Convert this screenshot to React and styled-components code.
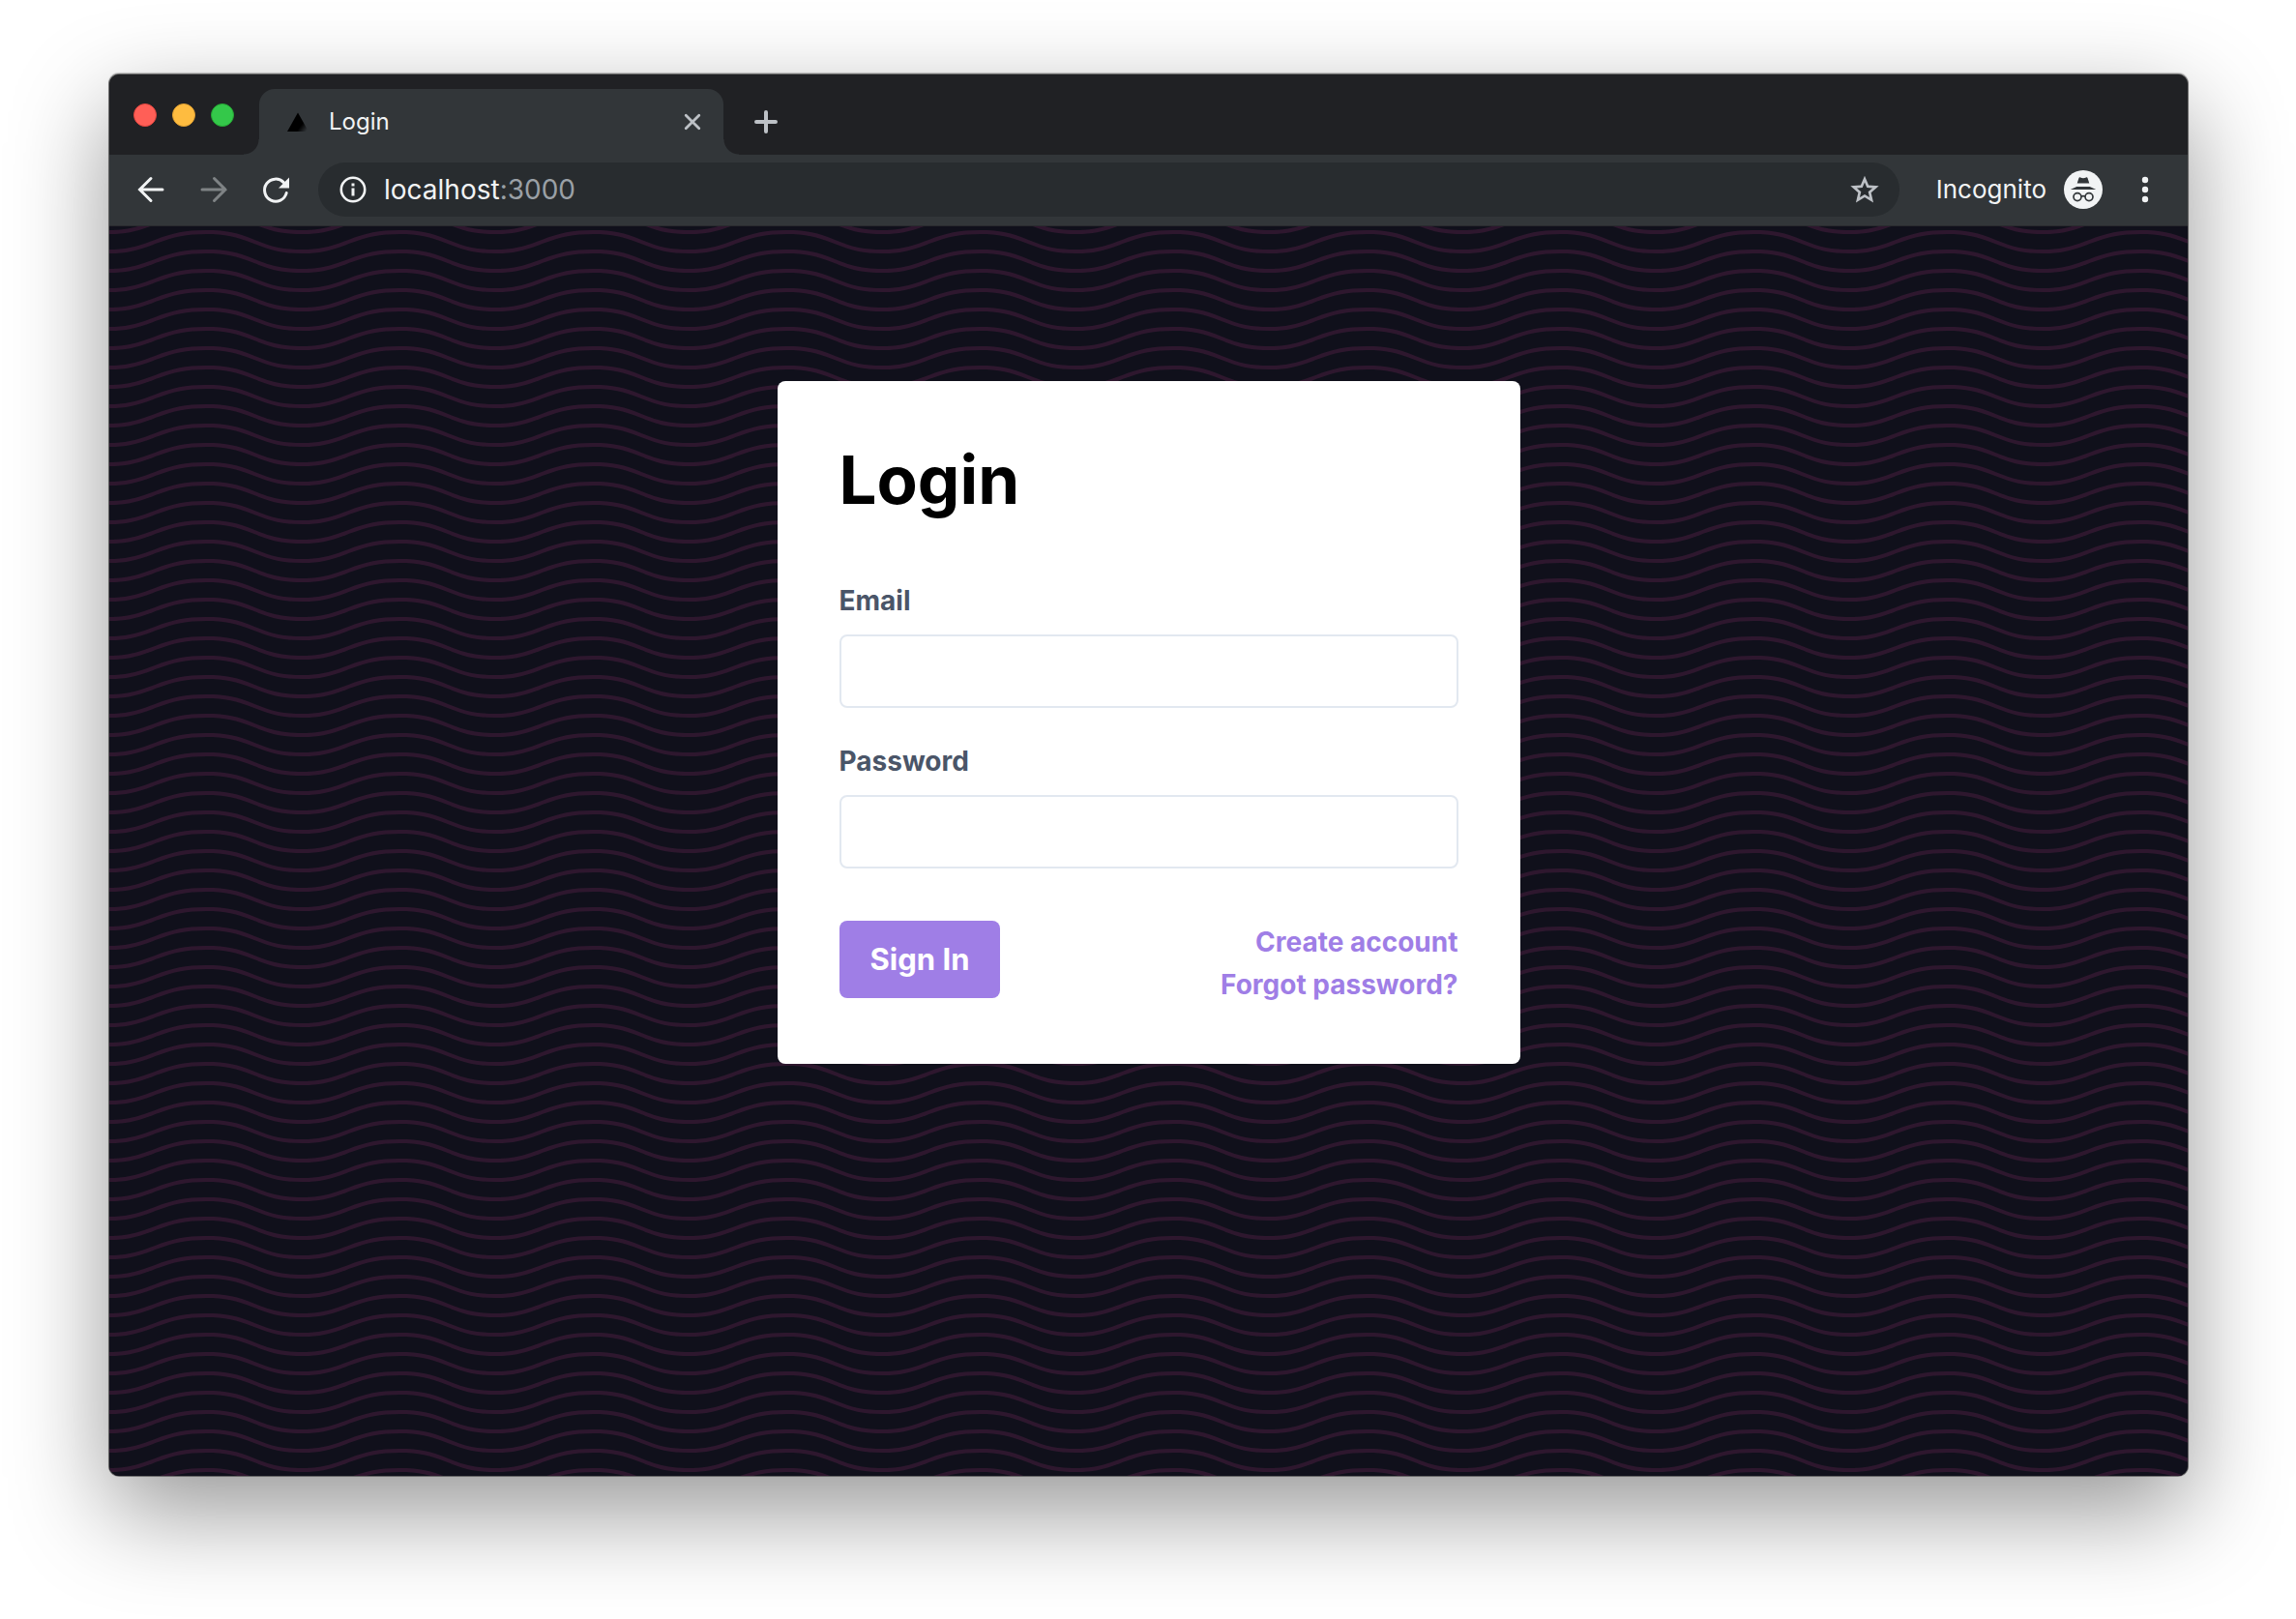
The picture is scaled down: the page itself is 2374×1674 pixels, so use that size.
import React from "react";
import styled, { createGlobalStyle } from "styled-components";

const GlobalStyle = createGlobalStyle`
  *, *::before, *::after { box-sizing: border-box; }
  body {
    margin: 0;
    background: #fff;
    font-family: Inter, "Liberation Sans", sans-serif;
  }
  button, input { font: inherit; }
`;

const WAVES = encodeURIComponent(
  `<svg xmlns="http://www.w3.org/2000/svg" width="200" height="40" viewBox="0 0 100 20"><path fill="#2e172e" fill-rule="evenodd" d="M21.184 20c.357-.13.72-.264 1.088-.402l1.768-.661C33.64 15.347 39.647 14 50 14c10.271 0 15.362 1.222 24.629 4.928.955.383 1.869.74 2.75 1.072h6.225c-2.51-.73-5.139-1.691-8.233-2.928C65.888 13.278 60.562 12 50 12c-10.626 0-16.855 1.397-26.66 5.063l-1.767.662c-2.475.923-4.66 1.674-6.724 2.275h6.335zm0-20C13.258 2.892 8.077 4 0 4V2c5.744 0 9.951-.574 14.85-2h6.334zM77.38 0C85.239 2.966 90.502 4 100 4V2c-6.842 0-11.386-.542-16.396-2h-6.225zM0 14c8.44 0 13.718-1.21 22.272-4.402l1.768-.661C33.64 5.347 39.647 4 50 4c10.271 0 15.362 1.222 24.629 4.928C84.112 12.722 89.438 14 100 14v-2c-10.271 0-15.362-1.222-24.629-4.928C65.888 3.278 60.562 2 50 2 39.374 2 33.145 3.397 23.34 7.063l-1.767.662C13.223 10.84 8.163 12 0 12v2z"/></svg>`
);

const Desktop = styled.div`
  display: flex;
  min-height: 100vh;
  padding: 77px 112px 148px 113px;
  overflow: hidden;
`;

const Window = styled.div`
  flex: 1;
  min-width: 0;
  display: flex;
  flex-direction: column;
  border-radius: 10px;
  overflow: hidden;
  background: #202124;
  box-shadow: 0 0 0 1px rgba(0, 0, 0, 0.4), 0 -1px 1px 1px rgba(0, 0, 0, 0.2),
    0 36px 100px rgba(0, 0, 0, 0.42);
`;

const TabStrip = styled.header`
  display: flex;
  align-items: flex-end;
  height: 83px;
  background: #202124;
`;

const WindowControls = styled.div`
  display: flex;
  align-items: center;
  gap: 16px;
  height: 83px;
  width: 155px;
  padding: 1px 0 0 25px;
`;

const ControlDot = styled.button`
  width: 24px;
  height: 24px;
  padding: 0;
  border: 1px solid ${(p) => p.$edge};
  border-radius: 50%;
  background: ${(p) => p.$fill};
`;

const Tab = styled.div`
  position: relative;
  display: flex;
  align-items: center;
  width: 480px;
  height: 68px;
  padding: 0 20px 0 28px;
  border-radius: 16px 16px 0 0;
  background: #323639;
  color: #f1f3f4;
  font-size: 24px;
  line-height: 32px;

  &::before,
  &::after {
    content: "";
    position: absolute;
    bottom: 0;
    width: 16px;
    height: 16px;
  }
  &::before {
    right: 100%;
    background: radial-gradient(circle at 0 0, transparent 15px, #323639 16px);
  }
  &::after {
    left: 100%;
    background: radial-gradient(circle at 100% 0, transparent 15px, #323639 16px);
  }
`;

const TabTitle = styled.span`
  flex: 1;
  margin-left: 20px;
`;

const IconButton = styled.button`
  display: inline-flex;
  align-items: center;
  justify-content: center;
  flex: none;
  width: ${(p) => p.$size || 32}px;
  height: ${(p) => p.$size || 32}px;
  padding: 0;
  border: 0;
  background: none;
  color: ${(p) => p.$color || "#f1f3f4"};
`;

const NewTab = styled.div`
  display: flex;
  align-items: center;
  height: 68px;
  margin-left: 28px;
`;

const Toolbar = styled.nav`
  display: flex;
  align-items: center;
  height: 74px;
  padding: 0 28px 1px;
  background: #323639;
  border-bottom: 1px solid #292b2e;
`;

const NavButtons = styled.div`
  display: flex;
  gap: 32px;
  margin-right: 28px;
`;

const AddressBar = styled.div`
  flex: 1;
  display: flex;
  align-items: center;
  height: 56px;
  padding: 0 20px;
  border-radius: 28px;
  background: #282c2f;
`;

const Address = styled.div`
  flex: 1;
  margin-left: 16px;
  color: #9aa0a6;
  font-size: 28px;
  line-height: 36px;
`;

const Host = styled.span`
  color: #f1f3f4;
`;

const Profile = styled.div`
  display: flex;
  align-items: center;
  gap: 18px;
  margin: 0 28px 0 38px;
  color: #f1f3f4;
  font-size: 26px;
  line-height: 36px;
`;

const Page = styled.main`
  flex: 1;
  padding: 160px 32px;
  background: #10101b url("data:image/svg+xml,${WAVES}") 0 0 / 200px 40px;
`;

const Card = styled.form`
  width: 100%;
  max-width: 768px;
  margin: 0 auto;
  padding: 64px 64px 60px;
  border-radius: 8px;
  background: #fff;
`;

const Title = styled.h1`
  margin: 0 0 68px;
  color: #000;
  font-size: 69px;
  font-weight: 700;
  line-height: 76px;
`;

const Field = styled.div`
  display: flex;
  flex-direction: column;
  gap: 16px;
  margin-bottom: ${(p) => (p.$last ? 54 : 36)}px;
`;

const Label = styled.label`
  color: #4a5568;
  font-size: 28px;
  font-weight: 700;
  line-height: 38px;
`;

const TextInput = styled.input`
  width: 100%;
  height: 76px;
  padding: 16px 24px;
  border: 2px solid #e2e8f0;
  border-radius: 8px;
  background: #fff;
  outline: none;
`;

const Actions = styled.div`
  display: flex;
  align-items: flex-start;
  justify-content: space-between;
`;

const SubmitButton = styled.button`
  height: 80px;
  padding: 0 32px;
  border: 0;
  border-radius: 8px;
  background: #9f7ee6;
  color: #fff;
  font-size: 31px;
  font-weight: 700;
  line-height: 48px;
`;

const Links = styled.div`
  display: flex;
  flex-direction: column;
  align-items: flex-end;
`;

const TextLink = styled.a`
  color: #9f7ee6;
  font-size: 28px;
  font-weight: 700;
  line-height: 44px;
  text-decoration: none;
`;

const Favicon = () => (
  <svg width="24" height="24" viewBox="0 0 24 24" aria-hidden="true">
    <defs>
      <linearGradient id="fav" x1="14" y1="14" x2="22" y2="20" gradientUnits="userSpaceOnUse">
        <stop offset="0.2" stopColor="#000" />
        <stop offset="1" stopColor="#000" stopOpacity="0" />
      </linearGradient>
    </defs>
    <path d="M12 2.500 23 22H1z" fill="url(#fav)" />
  </svg>
);

const CloseIcon = () => (
  <svg width="18" height="18" viewBox="0 0 18 18" fill="none" stroke="currentColor" strokeWidth="2.800" strokeLinecap="round" aria-hidden="true">
    <path d="M2.200 2.200l13.600 13.600M15.800 2.200L2.200 15.800" />
  </svg>
);

const PlusIcon = () => (
  <svg width="24" height="24" viewBox="0 0 24 24" fill="none" stroke="currentColor" strokeWidth="4" strokeLinecap="round" aria-hidden="true">
    <path d="M12 2v20M2 12h20" />
  </svg>
);

const ArrowIcon = ({ forward }) => (
  <svg width="32" height="32" viewBox="0 0 32 32" fill="none" stroke="currentColor" strokeWidth="3" strokeLinecap="round" aria-hidden="true">
    <path d={forward ? "M4 16h24M16.500 4.500L28 16L16.500 27.500" : "M27 16h-23M15 4.500L3.500 16L15 27.500"} />
  </svg>
);

const ReloadIcon = () => (
  <svg width="32" height="32" viewBox="0 0 32 32" aria-hidden="true">
    <path d="M27.200 19.500A11.500 11.500 0 1 1 24.300 8.600" fill="none" stroke="currentColor" strokeWidth="3" strokeLinecap="round" />
    <path d="M30 3.500v11H19z" fill="currentColor" />
  </svg>
);

const InfoIcon = () => (
  <svg width="32" height="32" viewBox="0 0 32 32" aria-hidden="true">
    <circle cx="16" cy="16" r="12.200" fill="none" stroke="currentColor" strokeWidth="2.600" />
    <path d="M14.500 9.500h3v3h-3zM14.500 14.500h3v8h-3z" fill="currentColor" />
  </svg>
);

const StarIcon = () => (
  <svg width="32" height="32" viewBox="0 0 24 24" fill="currentColor" aria-hidden="true">
    <path d="M23 9.240l-7.910-.680L12 1.300 8.910 8.570 1 9.240l6 5.200L5.200 22.200 12 18.070l6.800 4.130L17 14.440l6-5.200zM12 15.700l-3.760 2.270 1-4.280-3.320-2.880 4.380-.380L12 6.400l1.710 4.040 4.380.380-3.320 2.880 1 4.280L12 15.700z" />
  </svg>
);

const IncognitoIcon = () => (
  <svg width="40" height="40" viewBox="0 0 40 40" aria-hidden="true">
    <circle cx="20" cy="20" r="20" fill="#f1f3f4" />
    <path d="M15.500 8c.3-.7.900-.8 1.500-.5 2 .9 4 .9 6 0 .6-.3 1.200-.2 1.500.5L26.300 13.500H13.700zM6.800 20l6.400-3h13.600l6.400 3z" fill="#323639" />
    <g fill="none" stroke="#323639" strokeWidth="1.700">
      <circle cx="14" cy="27.600" r="4" />
      <circle cx="26" cy="27.600" r="4" />
      <path d="M18 27.300q2-1.300 4 0" />
    </g>
  </svg>
);

const MenuIcon = () => (
  <svg width="32" height="32" viewBox="0 0 32 32" fill="currentColor" aria-hidden="true">
    <circle cx="16" cy="6" r="3.200" />
    <circle cx="16" cy="16" r="3.200" />
    <circle cx="16" cy="26" r="3.200" />
  </svg>
);

export default function App() {
  return (
    <>
      <GlobalStyle />
      <Desktop>
        <Window>
          <TabStrip>
            <WindowControls>
              <ControlDot aria-label="Close window" $fill="#ff5f57" $edge="#e2463f" />
              <ControlDot aria-label="Minimize window" $fill="#febc40" $edge="#e0a030" />
              <ControlDot aria-label="Zoom window" $fill="#34c84a" $edge="#25a834" />
            </WindowControls>
            <Tab>
              <Favicon />
              <TabTitle>Login</TabTitle>
              <IconButton $size={24} $color="#bdc1c6" aria-label="Close tab">
                <CloseIcon />
              </IconButton>
            </Tab>
            <NewTab>
              <IconButton $color="#bdc1c6" aria-label="New tab">
                <PlusIcon />
              </IconButton>
            </NewTab>
          </TabStrip>
          <Toolbar>
            <NavButtons>
              <IconButton aria-label="Back">
                <ArrowIcon />
              </IconButton>
              <IconButton $color="#7f8385" aria-label="Forward">
                <ArrowIcon forward />
              </IconButton>
              <IconButton aria-label="Reload">
                <ReloadIcon />
              </IconButton>
            </NavButtons>
            <AddressBar>
              <IconButton aria-label="Site information">
                <InfoIcon />
              </IconButton>
              <Address>
                <Host>localhost</Host>:3000
              </Address>
              <IconButton $color="#bdc1c6" aria-label="Bookmark this page">
                <StarIcon />
              </IconButton>
            </AddressBar>
            <Profile>
              Incognito
              <IncognitoIcon />
            </Profile>
            <IconButton aria-label="Menu">
              <MenuIcon />
            </IconButton>
          </Toolbar>
          <Page>
            <Card onSubmit={(e) => e.preventDefault()}>
              <Title>Login</Title>
              <Field>
                <Label htmlFor="email">Email</Label>
                <TextInput id="email" type="email" />
              </Field>
              <Field $last>
                <Label htmlFor="password">Password</Label>
                <TextInput id="password" type="password" />
              </Field>
              <Actions>
                <SubmitButton type="submit">Sign In</SubmitButton>
                <Links>
                  <TextLink href="#create">Create account</TextLink>
                  <TextLink href="#forgot">Forgot password?</TextLink>
                </Links>
              </Actions>
            </Card>
          </Page>
        </Window>
      </Desktop>
    </>
  );
}
